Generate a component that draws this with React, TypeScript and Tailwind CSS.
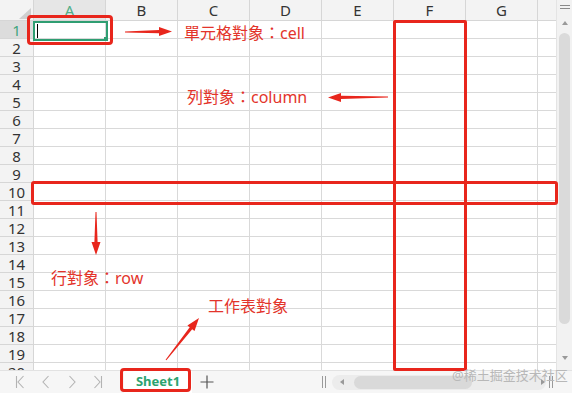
import React from "react";

const RED = "#e8261c";
const GREEN = "#2f9e72";

function arrowPoints(tx: number, ty: number, hx: number, hy: number, headLen = 13, headHalf = 4.5, shaftHalf = 1.6, tailHalf = 0.5) {
  const dx = hx - tx;
  const dy = hy - ty;
  const len = Math.hypot(dx, dy);
  const ux = dx / len;
  const uy = dy / len;
  const nx = -uy;
  const ny = ux;
  const bx = hx - ux * headLen;
  const by = hy - uy * headLen;
  const pts: [number, number][] = [
    [tx + nx * tailHalf, ty + ny * tailHalf],
    [bx + nx * shaftHalf, by + ny * shaftHalf],
    [bx + nx * headHalf, by + ny * headHalf],
    [hx, hy],
    [bx - nx * headHalf, by - ny * headHalf],
    [bx - nx * shaftHalf, by - ny * shaftHalf],
    [tx - nx * tailHalf, ty - ny * tailHalf],
  ];
  return pts.map((p) => `${p[0].toFixed(1)},${p[1].toFixed(1)}`).join(" ");
}

const cols = ["A", "B", "C", "D", "E", "F", "G"];
const rows = Array.from({ length: 20 }, (_, i) => i + 1);

export default function App() {
  return (
    <div className="relative w-[572px] h-[393px] overflow-hidden bg-white font-['Noto_Sans','Noto_Sans_CJK_TC',sans-serif] text-[#333]">
      <div className="flex h-[370px]">
        {/* grid */}
        <div className="flex-1 overflow-hidden bg-white">
          <div className="flex h-[21px] bg-[#f3f3f3] border-b border-[#d6d6d6]">
            <div className="relative w-[34px] shrink-0 border-r border-[#d6d6d6]">
              <div className="absolute right-[2px] bottom-[1px] w-0 h-0 border-l-[12px] border-l-transparent border-b-[11px] border-b-[#cfcfcf]" />
            </div>
            {cols.map((c) => (
              <div
                key={c}
                className={`w-[72px] shrink-0 border-r border-[#d6d6d6] flex items-center justify-center text-[15px] leading-none ${
                  c === "A" ? "bg-[#e6e6e6] text-[#4fae88]" : "text-[#333]"
                }`}
              >
                {c}
              </div>
            ))}
            <div className="flex-1" />
          </div>
          {rows.map((r) => (
            <div key={r} className="flex h-[18px]">
              <div
                className={`w-[34px] shrink-0 border-r border-b border-[#d6d6d6] flex items-center justify-center text-[15px] leading-[18px] ${
                  r === 1 ? "bg-[#dcdcdc] text-[#3fa57e]" : "bg-[#f3f3f3] text-[#333]"
                }`}
              >
                {r}
              </div>
              {cols.map((c) => (
                <div key={c} className="w-[72px] shrink-0 border-r border-b border-[#d9d9d9]" />
              ))}
              <div className="flex-1 border-b border-[#d9d9d9]" />
            </div>
          ))}
        </div>
        {/* vertical scrollbar */}
        <div className="relative w-[16px] shrink-0 bg-[#f2f2f2] border-l border-[#e4e4e4] flex flex-col items-center">
          <div className="mt-[5px] flex flex-col gap-[2px]">
            <div className="w-[10px] h-[1px] bg-[#8a8a8a]" />
            <div className="w-[10px] h-[1px] bg-[#8a8a8a]" />
          </div>
          <div className="mt-[12px] w-0 h-0 border-l-[3px] border-l-transparent border-r-[3px] border-r-transparent border-b-[4px] border-b-[#999]" />
          <div className="mt-[8px] w-[11px] h-[291px] rounded-full bg-[#dadada]" />
          <div className="mt-[32px] w-0 h-0 border-l-[3px] border-l-transparent border-r-[3px] border-r-transparent border-t-[4px] border-t-[#999]" />
        </div>
      </div>

      {/* bottom bar */}
      <div className="flex items-center h-[23px] bg-[#f6f6f6] border-t border-[#e2e2e2]">
        <div className="flex items-center gap-[16px] pl-[15px] text-[#b3b3b3]">
          <svg width="10" height="14" viewBox="0 0 10 14" fill="none" stroke="currentColor" strokeWidth="1.1">
            <path d="M1.5 1v12M8.5 1L3 7l5.5 6" />
          </svg>
          <svg width="10" height="14" viewBox="0 0 10 14" fill="none" stroke="currentColor" strokeWidth="1.1">
            <path d="M7.5 1L2 7l5.5 6" />
          </svg>
          <svg width="10" height="14" viewBox="0 0 10 14" fill="none" stroke="currentColor" strokeWidth="1.1">
            <path d="M2.5 1L8 7l-5.5 6" />
          </svg>
          <svg width="10" height="14" viewBox="0 0 10 14" fill="none" stroke="currentColor" strokeWidth="1.1">
            <path d="M1.5 1L7 7l-5.5 6M8.5 1v12" />
          </svg>
        </div>
        <div className="ml-[21px] w-[68px] h-[22px] bg-white flex items-center justify-center text-[13px] font-bold text-[#2ca36f] -mt-[1px]">
          Sheet1
        </div>
        <div className="ml-[8px] text-[#555]">
          <svg width="14" height="14" viewBox="0 0 14 14" stroke="currentColor" strokeWidth="1.2">
            <path d="M7 0.5v13M0.5 7h13" />
          </svg>
        </div>
        <div className="ml-[108px] flex gap-[2px]">
          <div className="w-[1px] h-[12px] bg-[#9a9a9a]" />
          <div className="w-[1px] h-[12px] bg-[#9a9a9a]" />
        </div>
        <div className="ml-[6px] w-[214px] h-[15px] rounded-full bg-[#ececec] flex items-center">
          <div className="ml-[8px] w-0 h-0 border-t-[3px] border-t-transparent border-b-[3px] border-b-transparent border-r-[4px] border-r-[#999]" />
          <div className="ml-[10px] w-[118px] h-[13px] rounded-full bg-[#d9d9d9]" />
          <div className="ml-[69px] w-0 h-0 border-t-[3px] border-t-transparent border-b-[3px] border-b-transparent border-l-[4px] border-l-[#999]" />
        </div>
        <div className="ml-[3px] flex gap-[2px]">
          <div className="w-[1px] h-[12px] bg-[#9a9a9a]" />
          <div className="w-[1px] h-[12px] bg-[#9a9a9a]" />
        </div>
      </div>

      {/* selected cell */}
      <div className="absolute left-[33px] top-[21px] w-[75px] h-[20px] border-2 border-[#2f9e72]" style={{ borderColor: GREEN }} />
      <div className="absolute left-[104px] top-[37px] w-[4px] h-[4px] bg-[#2f9e72]" />
      <div className="absolute left-[37px] top-[24px] w-[1px] h-[14px] bg-black" />

      {/* annotations */}
      <div className="absolute left-[27px] top-[15px] w-[86px] h-[30px] border-[3px] border-[#e8261c] rounded-[4px]" />
      <div className="absolute left-[393px] top-[20px] w-[74px] h-[351px] border-[3px] border-[#e8261c] rounded-[2px]" />
      <div className="absolute left-[31px] top-[181px] w-[527px] h-[24px] border-[3px] border-[#e8261c] rounded-[3px]" />
      <div className="absolute left-[120px] top-[368px] w-[71px] h-[24px] border-[3px] border-[#e8261c] rounded-[4px]" />

      <svg className="absolute left-0 top-0 pointer-events-none" width="572" height="393">
        <polygon points={arrowPoints(125, 32, 172, 31.5)} fill={RED} />
        <polygon points={arrowPoints(388, 97, 328, 97.5)} fill={RED} />
        <polygon points={arrowPoints(96, 212, 96, 255)} fill={RED} />
        <polygon points={arrowPoints(166, 360, 199, 318)} fill={RED} />
      </svg>

      <div className="absolute left-[184px] top-[22px] text-[16px] leading-[22px] text-[#e3342b] whitespace-nowrap">單元格對象：cell</div>
      <div className="absolute left-[187px] top-[86px] text-[16px] leading-[22px] text-[#e3342b] whitespace-nowrap">列對象：column</div>
      <div className="absolute left-[51px] top-[267px] text-[16px] leading-[22px] text-[#e3342b] whitespace-nowrap">行對象：row</div>
      <div className="absolute left-[208px] top-[295px] text-[16px] leading-[22px] text-[#e3342b] whitespace-nowrap">工作表對象</div>

      <div className="absolute left-[452px] top-[366px] text-[13px] leading-[18px] text-[#b8b8b8] whitespace-nowrap font-['Noto_Sans','Noto_Sans_CJK_SC',sans-serif]">@稀土掘金技术社区</div>
    </div>
  );
}
